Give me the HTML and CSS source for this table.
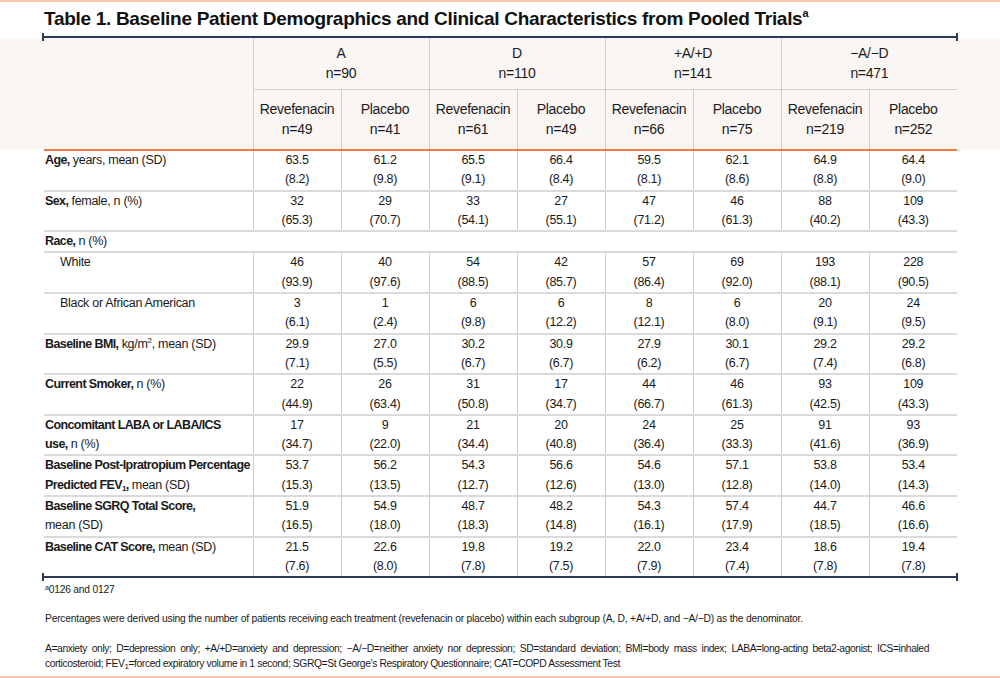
FILE: index.html
```html
<!DOCTYPE html>
<html lang="en">
<head>
<meta charset="utf-8">
<title>Table 1</title>
<link rel="stylesheet" href="styles.css">
</head>
<body>
<div class="page">
  <h1 class="title">Table 1. Baseline Patient Demographics and Clinical Characteristics from Pooled Trials<sup>a</sup></h1>
  <div class="rule"></div>
  <div class="band">
    <table class="tbl head">
      <colgroup><col class="c-label"><col><col><col><col><col><col><col><col></colgroup>
      <tr class="grp">
        <th rowspan="2" class="lab"></th>
        <th colspan="2">A<br>n=90</th>
        <th colspan="2">D<br>n=110</th>
        <th colspan="2">+A/+D<br>n=141</th>
        <th colspan="2">−A/−D<br>n=471</th>
      </tr>
      <tr class="sub">
        <th>Revefenacin<br>n=49</th><th>Placebo<br>n=41</th>
        <th>Revefenacin<br>n=61</th><th>Placebo<br>n=49</th>
        <th>Revefenacin<br>n=66</th><th>Placebo<br>n=75</th>
        <th>Revefenacin<br>n=219</th><th>Placebo<br>n=252</th>
      </tr>
    </table>
  </div>
  <table class="tbl body">
    <colgroup><col class="c-label"><col><col><col><col><col><col><col><col></colgroup>
    <tr><td class="lab"><b>Age,</b> years, mean (SD)</td><td>63.5<br>(8.2)</td><td>61.2<br>(9.8)</td><td>65.5<br>(9.1)</td><td>66.4<br>(8.4)</td><td>59.5<br>(8.1)</td><td>62.1<br>(8.6)</td><td>64.9<br>(8.8)</td><td>64.4<br>(9.0)</td></tr>
    <tr><td class="lab"><b>Sex,</b> female, n (%)</td><td>32<br>(65.3)</td><td>29<br>(70.7)</td><td>33<br>(54.1)</td><td>27<br>(55.1)</td><td>47<br>(71.2)</td><td>46<br>(61.3)</td><td>88<br>(40.2)</td><td>109<br>(43.3)</td></tr>
    <tr class="span"><td class="lab" colspan="9"><b>Race,</b> n (%)</td></tr>
    <tr><td class="lab ind">White</td><td>46<br>(93.9)</td><td>40<br>(97.6)</td><td>54<br>(88.5)</td><td>42<br>(85.7)</td><td>57<br>(86.4)</td><td>69<br>(92.0)</td><td>193<br>(88.1)</td><td>228<br>(90.5)</td></tr>
    <tr><td class="lab ind">Black or African American</td><td>3<br>(6.1)</td><td>1<br>(2.4)</td><td>6<br>(9.8)</td><td>6<br>(12.2)</td><td>8<br>(12.1)</td><td>6<br>(8.0)</td><td>20<br>(9.1)</td><td>24<br>(9.5)</td></tr>
    <tr><td class="lab"><b>Baseline BMI,</b> kg/m<sup>2</sup>, mean (SD)</td><td>29.9<br>(7.1)</td><td>27.0<br>(5.5)</td><td>30.2<br>(6.7)</td><td>30.9<br>(6.7)</td><td>27.9<br>(6.2)</td><td>30.1<br>(6.7)</td><td>29.2<br>(7.4)</td><td>29.2<br>(6.8)</td></tr>
    <tr><td class="lab"><b>Current Smoker,</b> n (%)</td><td>22<br>(44.9)</td><td>26<br>(63.4)</td><td>31<br>(50.8)</td><td>17<br>(34.7)</td><td>44<br>(66.7)</td><td>46<br>(61.3)</td><td>93<br>(42.5)</td><td>109<br>(43.3)</td></tr>
    <tr><td class="lab"><b>Concomitant LABA or LABA/ICS</b><br><b>use,</b> n (%)</td><td>17<br>(34.7)</td><td>9<br>(22.0)</td><td>21<br>(34.4)</td><td>20<br>(40.8)</td><td>24<br>(36.4)</td><td>25<br>(33.3)</td><td>91<br>(41.6)</td><td>93<br>(36.9)</td></tr>
    <tr><td class="lab"><b>Baseline Post-Ipratropium Percentage</b><br><b>Predicted FEV<sub>1</sub>,</b> mean (SD)</td><td>53.7<br>(15.3)</td><td>56.2<br>(13.5)</td><td>54.3<br>(12.7)</td><td>56.6<br>(12.6)</td><td>54.6<br>(13.0)</td><td>57.1<br>(12.8)</td><td>53.8<br>(14.0)</td><td>53.4<br>(14.3)</td></tr>
    <tr><td class="lab"><b>Baseline SGRQ Total Score,</b><br>mean (SD)</td><td>51.9<br>(16.5)</td><td>54.9<br>(18.0)</td><td>48.7<br>(18.3)</td><td>48.2<br>(14.8)</td><td>54.3<br>(16.1)</td><td>57.4<br>(17.9)</td><td>44.7<br>(18.5)</td><td>46.6<br>(16.6)</td></tr>
    <tr class="last"><td class="lab"><b>Baseline CAT Score,</b> mean (SD)</td><td>21.5<br>(7.6)</td><td>22.6<br>(8.0)</td><td>19.8<br>(7.8)</td><td>19.2<br>(7.5)</td><td>22.0<br>(7.9)</td><td>23.4<br>(7.4)</td><td>18.6<br>(7.8)</td><td>19.4<br>(7.8)</td></tr>
  </table>
  <div class="rule bottom"></div>
  <div class="notes">
    <p class="n1"><sup>a</sup>0126 and 0127</p>
    <p class="n2">Percentages were derived using the number of patients receiving each treatment (revefenacin or placebo) within each subgroup (A, D, +A/+D, and −A/−D) as the denominator.</p>
    <div class="n3">
      <p class="just">A=anxiety only; D=depression only; +A/+D=anxiety and depression; −A/−D=neither anxiety nor depression; SD=standard deviation; BMI=body mass index; LABA=long-acting beta2-agonist; ICS=inhaled</p>
      <p>corticosteroid; FEV<sub>1</sub>=forced expiratory volume in 1 second; SGRQ=St George’s Respiratory Questionnaire; CAT=COPD Assessment Test</p>
    </div>
  </div>
</div>
</body>
</html>
```

FILE: styles.css
```css
* { box-sizing: border-box; }
html, body { margin: 0; padding: 0; background: #fff; }
body {
  font-family: "Liberation Sans", Arial, sans-serif;
  color: #1a1a1a;
}
.page {
  width: 1000px;
  height: 678px;
  border-top: 2px solid #f8c6ad;
  border-bottom: 2px solid #f8c6ad;
  overflow: hidden;
}
.title {
  margin: 0 0 0 44px;
  height: 34px;
  padding-top: 5px;
  font-size: 19px;
  line-height: 23px;
  font-weight: bold;
  color: #111;
  letter-spacing: -0.3px;
}
.title sup {
  font-size: 11px;
  vertical-align: 8px;
  line-height: 0;
  letter-spacing: 0;
}
.rule {
  position: relative;
  margin-left: 42px;
  width: 916px;
  height: 2px;
  background: #2c3a57;
}
.rule::before, .rule::after {
  content: "";
  position: absolute;
  top: -3px;
  width: 2px;
  height: 8px;
  background: #2c3a57;
}
.rule::before { left: 0; }
.rule::after { right: 0; }

.band {
  background: #faf6f4;
  height: 111px;
}
.tbl {
  margin-left: 44px;
  width: 913px;
  table-layout: fixed;
  border-collapse: collapse;
}
.tbl col { width: 88px; }
.tbl col.c-label { width: 209px; }

.head th {
  font-weight: normal;
  font-size: 14px;
  letter-spacing: -0.3px;
  line-height: 20px;
  text-align: center;
  padding: 0;
  border-left: 1px solid #cfcfcf;
  color: #1a1a1a;
}
.head th.lab { border-left: none; }
.head tr.grp th { height: 51px; border-bottom: 1px solid #cfcfcf; }
.head tr.grp th.lab { border-bottom: none; }
.head tr.sub th { height: 60px; }

.body {
  border-top: 2px solid #ef7a44;
}
.body td {
  font-size: 12.5px;
  letter-spacing: -0.3px;
  line-height: 19.3px;
  padding: 0;
  text-align: center;
  vertical-align: top;
  border-left: 1px solid #cdcdcd;
  border-bottom: 2px solid #dadada;
}
.body td.lab {
  text-align: left;
  border-left: none;
  padding-left: 1px;
  white-space: nowrap;
}
.body td.lab b { letter-spacing: -0.6px; }
.body td.ind { padding-left: 16px; }
.body tr.last td { border-bottom: none; }
.body sup { font-size: 8px; vertical-align: 5px; line-height: 0; }
.body sub, .notes sub { font-size: 8px; vertical-align: -2px; line-height: 0; }

.notes {
  margin-left: 45px;
  width: 884px;
  font-size: 10.3px;
  letter-spacing: -0.22px;
  line-height: 15px;
  color: #1a1a1a;
}
.notes p { margin: 0; }
.notes .n1 { padding-top: 4px; }
.notes .n1 sup { font-size: 7px; vertical-align: 3px; line-height: 0; }
.notes .n2 { margin-top: 14px; }
.notes .n3 { margin-top: 15px; letter-spacing: -0.4px; }
.notes .just { text-align: justify; text-align-last: justify; white-space: nowrap; }
```
